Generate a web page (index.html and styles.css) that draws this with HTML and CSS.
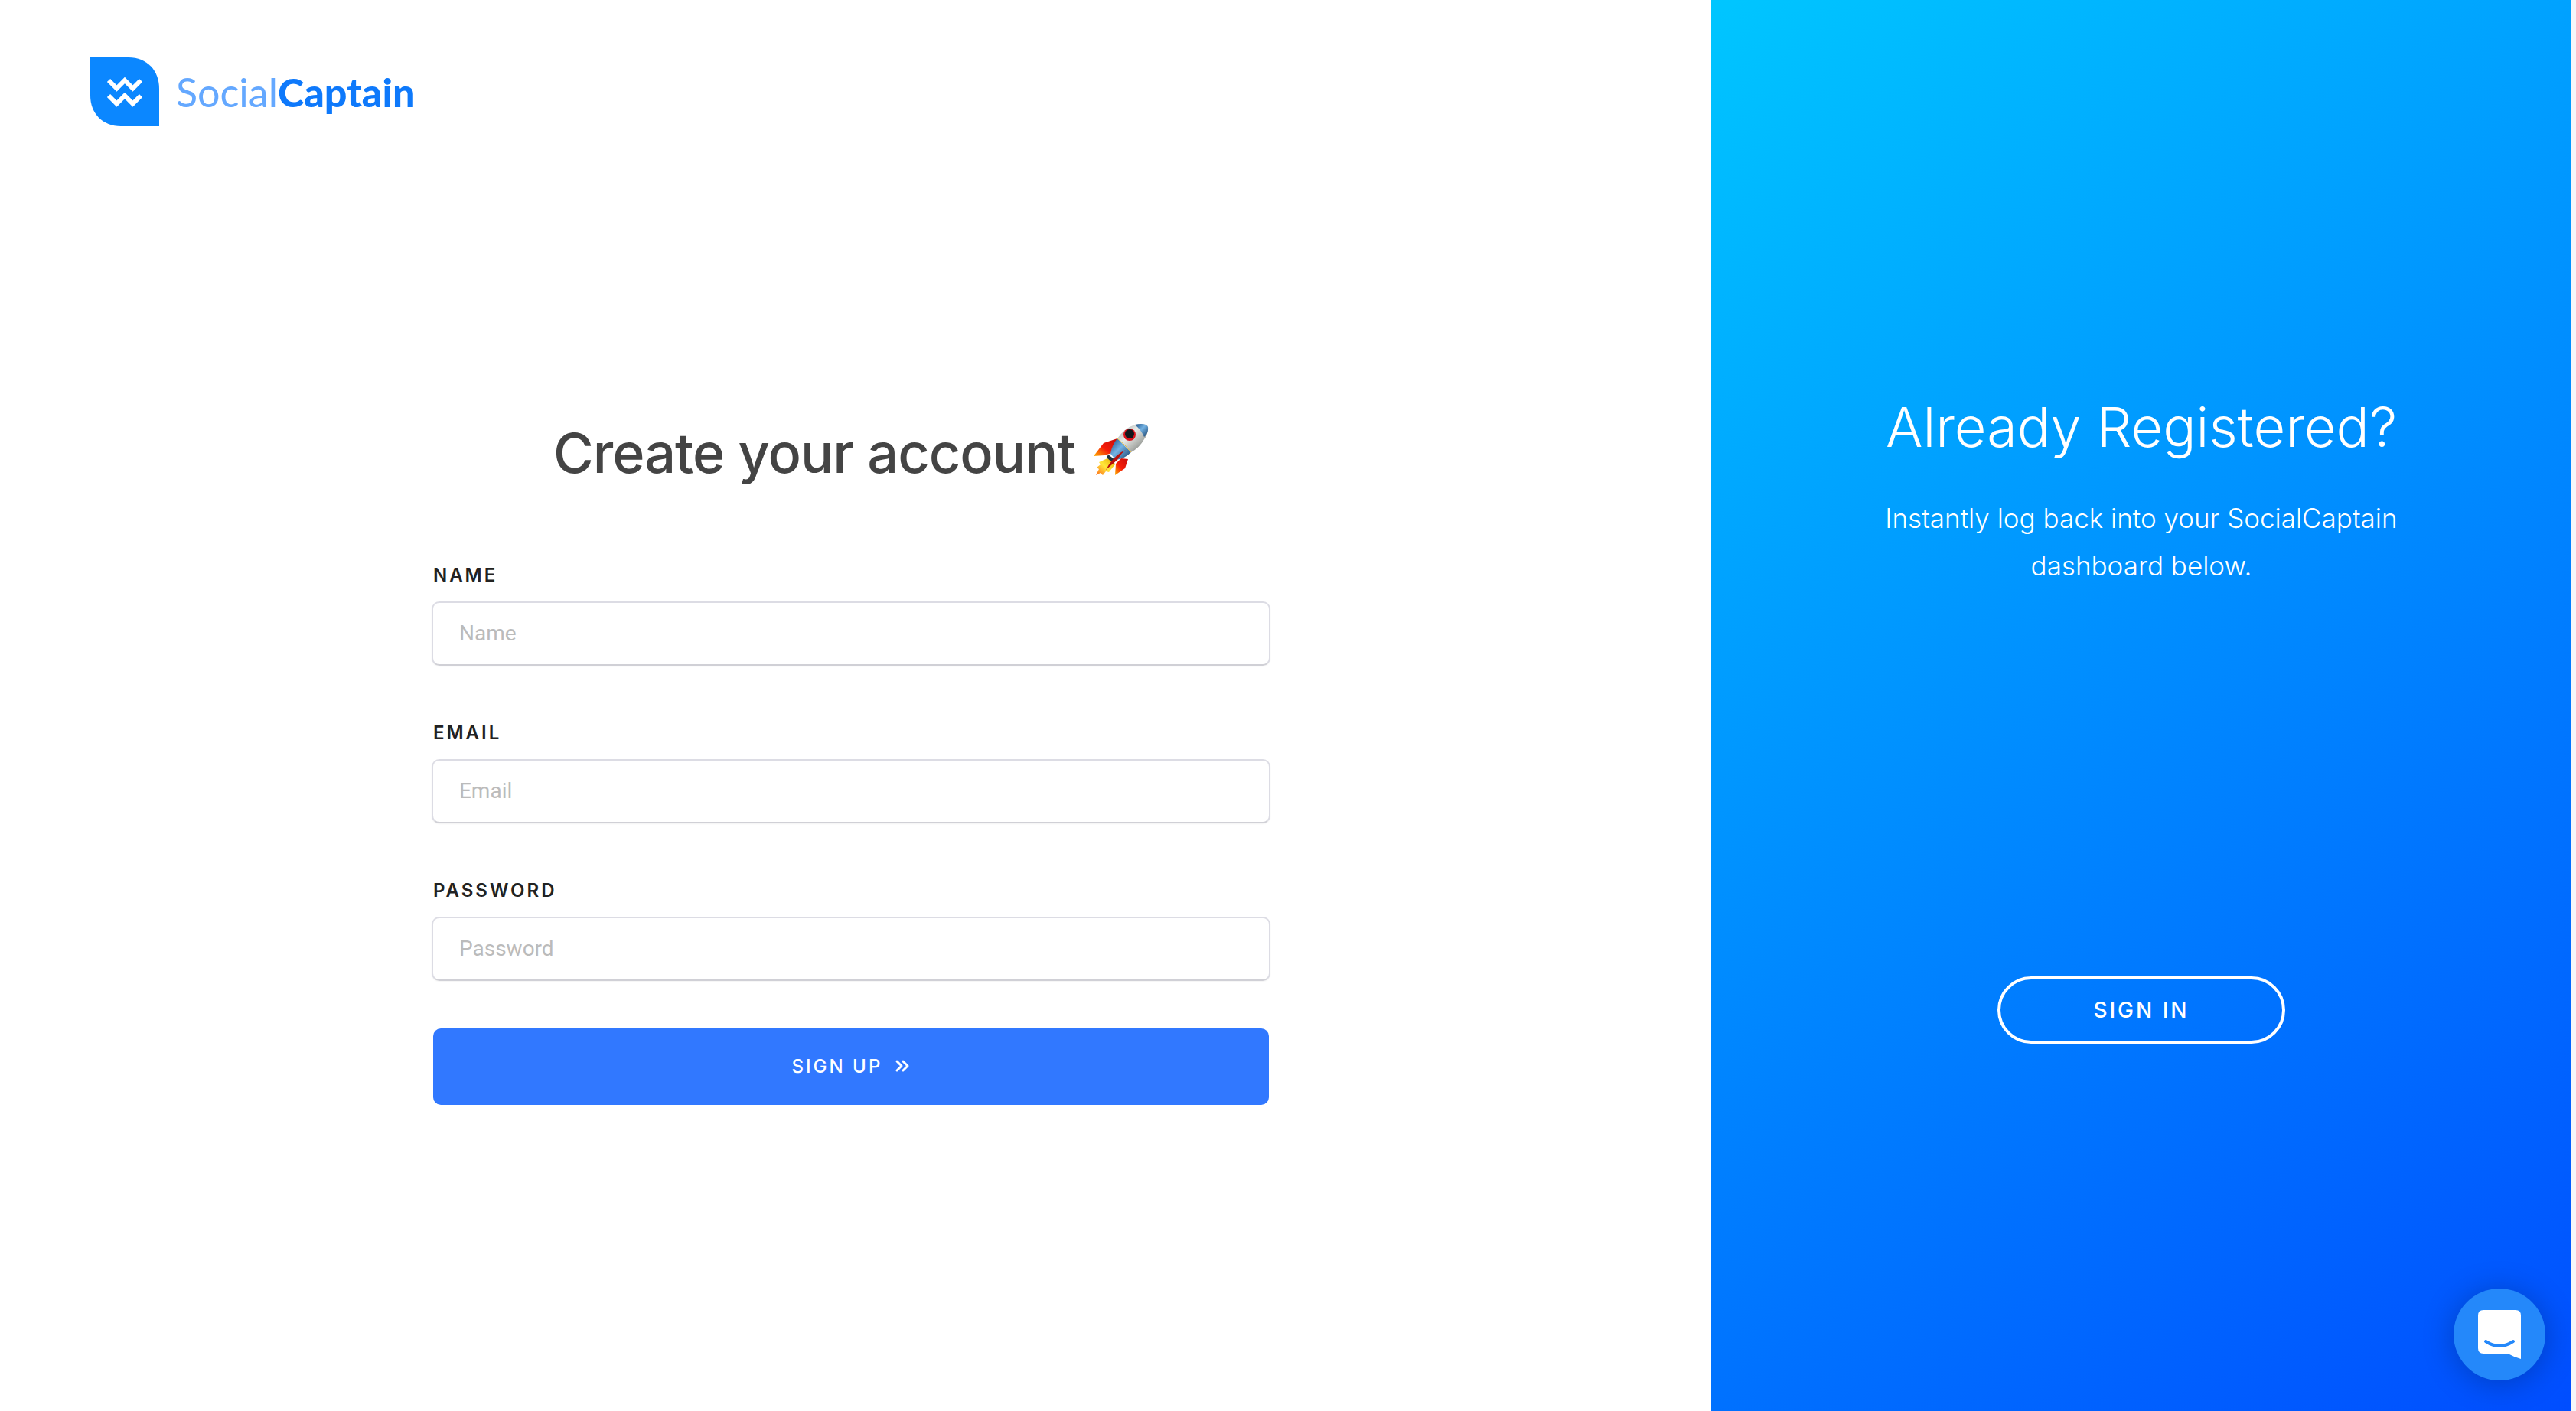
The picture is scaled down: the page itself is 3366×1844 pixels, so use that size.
FILE: index.html
```html
<!DOCTYPE html>
<html lang="en">
<head>
<meta charset="utf-8">
<title>SocialCaptain – Create your account</title>
<link rel="stylesheet" href="styles.css">
</head>
<body>
<div class="shell">
  <main class="signup">
    <header class="topbar">
      <a class="brand" href="#" aria-label="SocialCaptain">
        <svg class="brand-mark" viewBox="0 0 90 90" aria-hidden="true">
          <path d="M0 0H50C74 0 90 17 90 41V90H40C16 90 0 73 0 50Z" fill="#0b87ff"/>
          <path d="M24 30l10.500 10.500L45 30l10.500 10.500L66 30M24 50l10.500 10.500L45 50l10.500 10.500L66 50" fill="none" stroke="#fff" stroke-width="6"/>
        </svg>
        <span class="brand-name">Social<b>Captain</b></span>
      </a>
    </header>
    <form class="form">
      <h1 class="title">Create your account
        <svg class="rocket" viewBox="0 0 72 76" aria-hidden="true">
          <defs>
            <linearGradient id="hull" x1="0" y1="0" x2="1" y2="1">
              <stop offset="0" stop-color="#8f9996"/><stop offset=".4" stop-color="#e9ebe8"/><stop offset=".7" stop-color="#a9aca8"/><stop offset="1" stop-color="#4c504f"/>
            </linearGradient>
            <linearGradient id="blue" x1="0" y1="0" x2="1" y2="1">
              <stop offset="0" stop-color="#17497f"/><stop offset=".45" stop-color="#74b3e4"/><stop offset="1" stop-color="#123a66"/>
            </linearGradient>
            <linearGradient id="fin" x1="1" y1="0" x2="0" y2="1">
              <stop offset="0" stop-color="#c80e0a"/><stop offset=".55" stop-color="#f51c08"/><stop offset="1" stop-color="#ffb300"/>
            </linearGradient>
            <linearGradient id="flame" x1="1" y1="0" x2="0" y2="1">
              <stop offset="0" stop-color="#e8a800"/><stop offset=".5" stop-color="#ffe83a"/><stop offset="1" stop-color="#ff6a1a"/>
            </linearGradient>
          </defs>
          <path d="M31 19L13 25L0 42L14 41L24 38Z" fill="url(#fin)"/>
          <path d="M45 46L36 45L29 52L28 67L41 58Z" fill="url(#fin)"/>
          <path d="M18 45L7 50L9 53L4 57L7 59L3 67L9 64L12 67L16 62L20 63L28 53L26 48Z" fill="url(#flame)"/>
          <path d="M19 40L28 47L25 51L17 44Z" fill="#1e3440"/>
          <path d="M31 19Q24 27 22 39L29 47Q40 46 49 37Z" fill="url(#blue)"/>
          <path d="M31 19Q41 5 54 1Q70 -2 71 4Q71 15 66 20Q60 31 49 37Q41 28 31 19Z" fill="url(#hull)"/>
          <path d="M54 1Q68 -2 71 4Q72 12 66 17Q62 8 54 1Z" fill="url(#blue)"/>
          <path d="M31 19Q41 27 49 37" fill="none" stroke="#e6bc3c" stroke-width="1"/>
          <path d="M42 34Q37 37 31 47L16 60Q23 46 36 37Z" fill="#b9100c"/>
          <circle cx="47" cy="14" r="8" fill="#d8121a"/>
          <circle cx="47" cy="13" r="6" fill="#10171c"/>
        </svg>
      </h1>
      <div class="field">
        <label for="name">Name</label>
        <input id="name" type="text" placeholder="Name">
      </div>
      <div class="field">
        <label for="email">Email</label>
        <input id="email" type="email" placeholder="Email">
      </div>
      <div class="field">
        <label for="password">Password</label>
        <input id="password" type="password" placeholder="Password">
      </div>
      <button class="submit" type="button">Sign up
        <svg class="chevrons" viewBox="0 0 20 20" aria-hidden="true"><path d="M3 3l6 6-6 6M11 3l6 6-6 6" fill="none" stroke="#fff" stroke-width="3" stroke-linecap="round" stroke-linejoin="round"/></svg>
      </button>
    </form>
  </main>
  <aside class="signin">
    <h2 class="signin-title">Already Registered?</h2>
    <p class="signin-text">Instantly log back into your SocialCaptain dashboard below.</p>
    <a class="signin-button" href="#">Sign in</a>
  </aside>
</div>
<button class="chat" type="button" aria-label="Open chat">
  <svg class="chat-icon" viewBox="0 0 56 64" aria-hidden="true">
    <path d="M7 0H49Q56 0 56 7V64Q48 62 39 57H7Q0 57 0 50V7Q0 0 7 0Z" fill="#fff"/>
    <path d="M10 41Q28 53 46 41" fill="none" stroke="#2488fa" stroke-width="4" stroke-linecap="round"/>
  </svg>
</button>
</body>
</html>
```

FILE: styles.css
```css
* { box-sizing: border-box; }

body {
  margin: 0;
  background: #f5f6fa;
  font-family: Inter, "Open Sans", sans-serif;
}

.shell {
  display: grid;
  grid-template-columns: 1989fr 1000fr;
  min-height: 100vh;
  margin-right: 6px;
}

.signup {
  display: flex;
  flex-direction: column;
  background: #fff;
}

.topbar { padding: 75px 118px 0; }

.brand {
  display: inline-flex;
  align-items: center;
  gap: 22px;
  text-decoration: none;
}

.brand-mark { width: 90px; height: 90px; }

.brand-name {
  color: #64a8ff;
  font: 400 52px/60px Lato, sans-serif;
}

.brand-name b { color: #0e79fb; font-weight: 900; }

.form {
  display: flex;
  flex: 1;
  flex-direction: column;
  justify-content: center;
  width: 1092px;
  max-width: 90%;
  margin: 0 auto;
  padding: 0 12px 22px 0;
  box-sizing: content-box;
}

.title {
  display: flex;
  align-items: center;
  justify-content: center;
  gap: 24px;
  margin: 0 0 100px;
  color: #444;
  font-size: 72px;
  font-weight: 500;
  line-height: 88px;
  letter-spacing: -1px;
}

.rocket { width: 72px; height: 76px; }

.field { display: flex; flex-direction: column; gap: 18px; }
.field + .field { margin-top: 72px; }

.field label {
  color: #222;
  font-size: 24px;
  font-weight: 600;
  line-height: 32px;
  letter-spacing: 3px;
  text-transform: uppercase;
}

.field input {
  height: 84px;
  margin: 0 -2px;
  padding: 0 34px;
  border: 2px solid #dcdce4;
  border-bottom-color: #d0d0d6;
  border-radius: 10px;
  background: #fff;
  box-shadow: 0 1px 2px rgba(0, 0, 0, .05);
  font: 400 28px/36px Roboto, sans-serif;
}

.field input::placeholder { color: #bbb; }

.submit {
  display: flex;
  align-items: center;
  justify-content: center;
  gap: 16px;
  height: 100px;
  margin-top: 62px;
  border: 0;
  border-radius: 10px;
  background: #3178ff;
  color: #fff;
  font: 500 24px/32px Inter, sans-serif;
  letter-spacing: 3px;
  text-transform: uppercase;
}

.chevrons { width: 20px; height: 20px; }

.signin {
  display: flex;
  flex-direction: column;
  align-items: center;
  justify-content: center;
  padding: 34px 200px 0;
  background: linear-gradient(145deg, #00c6ff, #004dff);
  color: #fff;
  text-align: center;
}

.signin-title {
  margin: 0 0 44px;
  font-size: 72px;
  font-weight: 300;
  line-height: 88px;
}

.signin-text {
  margin: 0 0 506px;
  font-size: 35px;
  font-weight: 300;
  line-height: 62px;
}

.signin-button {
  width: 376px;
  border: 4px solid #fff;
  border-radius: 44px;
  color: #fff;
  font-size: 28px;
  font-weight: 500;
  line-height: 80px;
  letter-spacing: 3px;
  text-decoration: none;
  text-transform: uppercase;
}

.chat {
  position: fixed;
  right: 40px;
  bottom: 40px;
  display: flex;
  align-items: center;
  justify-content: center;
  width: 120px;
  height: 120px;
  padding: 0;
  border: 0;
  border-radius: 50%;
  background: #2488fa;
  box-shadow: 0 4px 40px rgba(0, 0, 0, .25);
}

.chat-icon { width: 56px; height: 64px; }
```
